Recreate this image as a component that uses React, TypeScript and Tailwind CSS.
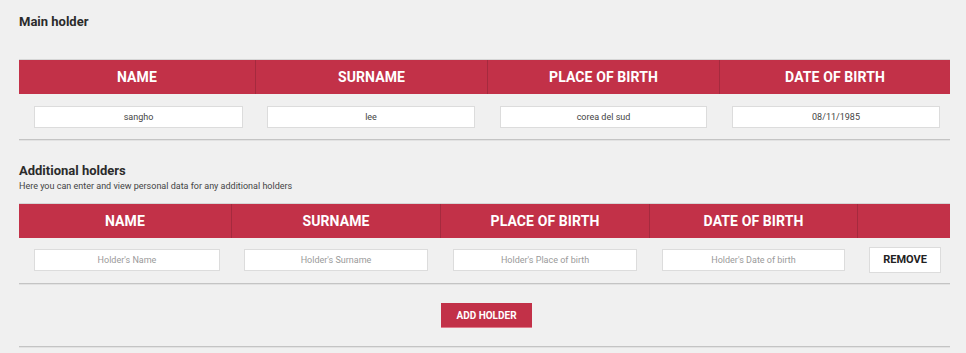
import React from "react";

const font = { fontFamily: "Roboto, 'Noto Sans', sans-serif" };

function Input({ value, placeholder }: { value?: string; placeholder?: string }) {
  return (
    <div className="h-[22px] w-full bg-white border border-[#dcdcdc] flex items-center justify-center text-[9px] leading-none">
      {value ? (
        <span className="text-[#444]">{value}</span>
      ) : (
        <span className="text-[#9a9a9a]">{placeholder}</span>
      )}
    </div>
  );
}

function HeadCell({ label, last }: { label: string; last?: boolean }) {
  return (
    <div
      className={`h-full flex items-center justify-center text-white font-bold text-[14px] tracking-[0.1px] ${
        last ? "" : "border-r border-[#a52a3e]"
      }`}
    >
      {label}
    </div>
  );
}

export default function App() {
  const heads = ["NAME", "SURNAME", "PLACE OF BIRTH", "DATE OF BIRTH"];
  const main = ["sangho", "lee", "corea del sud", "08/11/1985"];
  const mainPad = ["pl-[15px] pr-[13px]", "pl-[11px] pr-[13px]", "pl-[12px] pr-[13px]", "pl-[12px] pr-[10px]"];
  const ph = ["Holder's Name", "Holder's Surname", "Holder's Place of birth", "Holder's Date of birth"];
  return (
    <div className="w-[966px] h-[353px] bg-[#f0f0f0] overflow-hidden" style={font}>
      <div className="ml-[19px] w-[931px] pt-[15px]">
        <div className="text-[13px] font-bold text-[#2b2b2b] leading-[14px]">Main holder</div>

        <div className="mt-[30px] border-t border-[#d6d6d6] h-[35px] bg-[#c23148] grid grid-cols-[237px_232px_232px_230px]">
          {heads.map((h, i) => (
            <HeadCell key={h} label={h} last={i === 3} />
          ))}
        </div>
        <div className="grid grid-cols-[237px_232px_232px_230px] pt-[12px] pb-[11px]">
          {main.map((v, i) => (
            <div key={i} className={mainPad[i]}>
              <Input value={v} />
            </div>
          ))}
        </div>
        <div className="h-[2px] bg-[#c4c4c4] border-b border-[#e2e2e2]" />

        <div className="mt-[23px] text-[13px] font-bold text-[#2b2b2b] leading-[14px]">Additional holders</div>
        <div className="mt-[3px] text-[9px] text-[#444] leading-[10px]">
          Here you can enter and view personal data for any additional holders
        </div>

        <div className="mt-[12px] border-t border-[#d6d6d6] h-[35px] bg-[#c23148] grid grid-cols-[213px_209px_209px_208px_92px]">
          {heads.map((h) => (
            <HeadCell key={h} label={h} />
          ))}
          <HeadCell label="" last />
        </div>
        <div className="grid grid-cols-[213px_209px_209px_208px_92px] items-center pt-[9px] pb-[10px]">
          {ph.map((p, i) => (
            <div key={i} className={i === 0 ? "pl-[15px] pr-[12px]" : "pl-[12px] pr-[13px]"}>
              <Input placeholder={p} />
            </div>
          ))}
          <div className="pl-[11px] pr-[9px]">
            <div className="h-[26px] bg-white border border-[#dcdcdc] flex items-center justify-center text-[11px] font-bold text-[#222]">
              REMOVE
            </div>
          </div>
        </div>
        <div className="h-[2px] bg-[#c4c4c4] border-b border-[#e2e2e2]" />

        <div className="flex justify-center pt-[18px] pb-[18px]">
          <div className="ml-[4px] w-[91px] h-[25px] bg-[#c23148] border-b border-[#e07a8a] flex items-center justify-center text-white font-bold text-[10px]">
            ADD HOLDER
          </div>
        </div>
        <div className="h-[2px] bg-[#c4c4c4] border-b border-[#e2e2e2]" />
      </div>
    </div>
  );
}
